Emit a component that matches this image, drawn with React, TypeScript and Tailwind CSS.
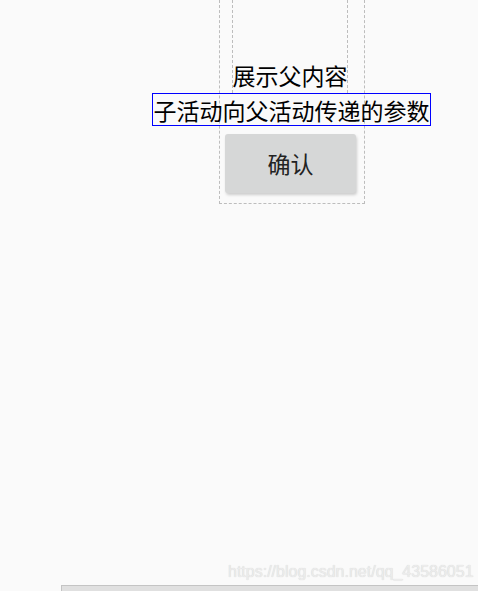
export default function App() {
  return (
    <div className="relative w-[478px] h-[591px] overflow-hidden bg-[#fafafa] font-['Noto_Sans_CJK_SC','Noto_Sans',sans-serif]">
      {/* layout bounds of the child activity */}
      <div className="ml-[219px] w-[146px] h-[204px] border-x border-b border-dashed border-[#bdbdbd] flex flex-col">
        <div className="ml-[12px] w-[116px] h-[93px] border-x border-dashed border-[#bdbdbd] flex flex-col justify-end items-center">
          <span className="text-[23px] leading-[28px] text-black whitespace-nowrap mb-[4px]">展示父内容</span>
        </div>
        <div className="-ml-[68px] w-[279px] h-[33px] border border-solid border-[color:#0000ff] flex items-center justify-center">
          <span className="text-[23px] leading-[28px] text-black whitespace-nowrap">子活动向父活动传递的参数</span>
        </div>
        <button className="ml-[5px] mt-[8px] w-[131px] h-[59px] rounded-[3px] bg-[#d6d7d7] shadow-[1px_2px_3px_rgba(0,0,0,0.18)] text-[23px] text-[#222] flex items-center justify-center">
          确认
        </button>
      </div>

      <span className="absolute left-[228px] top-[562px] text-[16px] leading-[20px] text-[#ececec] font-['Liberation_Sans',sans-serif] [text-shadow:0_0_1px_rgba(0,0,0,0.18)]">
        https://blog.csdn.net/qq_43586051
      </span>

      {/* bottom bar */}
      <div className="absolute left-[61px] right-0 top-[585px] h-[6px] bg-[#e0e0e0] border-t border-l border-[#c4c4c4]" />
    </div>
  )
}
